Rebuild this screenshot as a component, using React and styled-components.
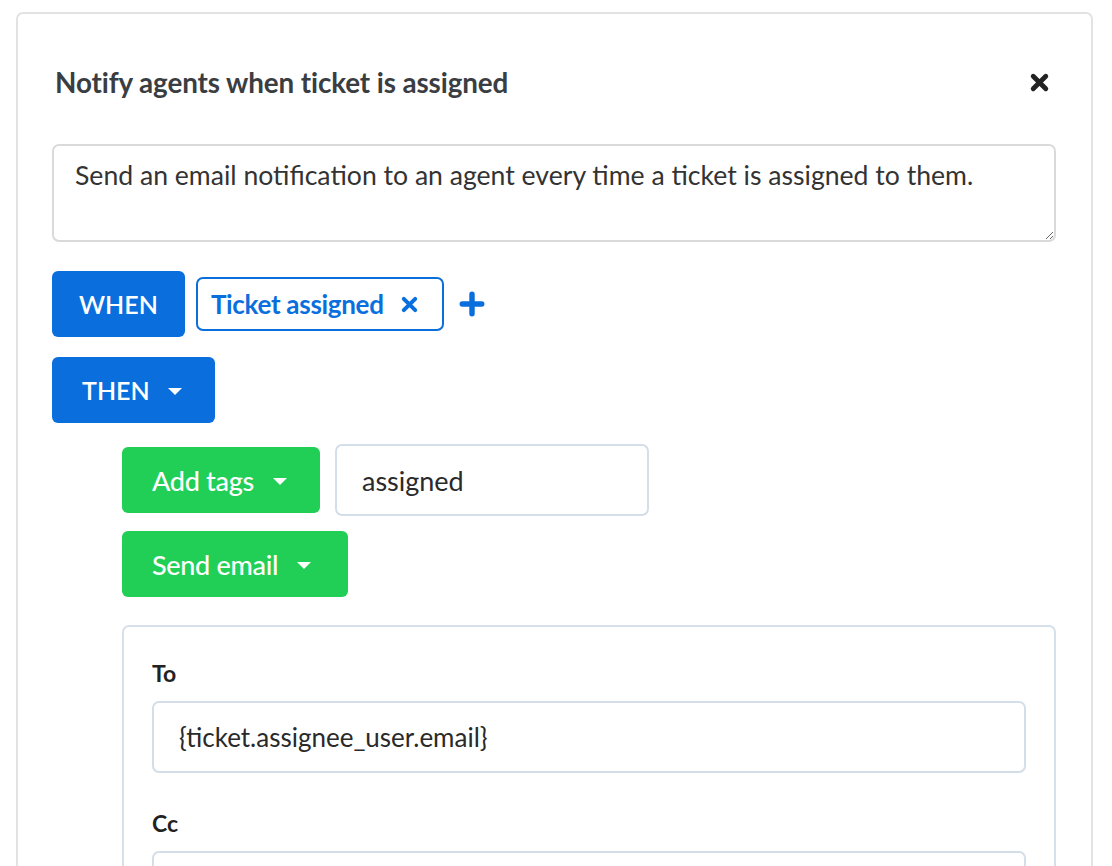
import React from "react";
import styled, { createGlobalStyle } from "styled-components";

const Global = createGlobalStyle`
  html, body { margin: 0; padding: 0; background: #ffffff; }
  body { font-family: Lato, "Open Sans", sans-serif; color: #333; }
  * { box-sizing: border-box; }
`;

const BLUE = "#0a6fdd";
const GREEN = "#21cf57";

const Page = styled.div`
  padding: 12px 19px 0 16px;
  height: 866px;
  overflow: hidden;
`;

const Card = styled.div`
  border: 2px solid #e2e2e2;
  border-radius: 7px;
  padding: 46px 35px 40px 34px;
  min-height: 900px;
`;

const Header = styled.div`
  display: flex;
  align-items: center;
  justify-content: space-between;
  height: 44px;
  margin-bottom: 40px;
`;

const Title = styled.h2`
  margin: 0 0 0 3px;
  font-size: 27.8px;
  font-weight: 700;
  color: #3a3d41;
  letter-spacing: -0.1px;
`;

const CloseBtn = styled.button`
  border: 0;
  background: none;
  padding: 0;
  margin-right: 6px;
  width: 22px;
  height: 22px;
  display: flex;
  align-items: center;
  justify-content: center;
  cursor: pointer;
`;

const Description = styled.textarea`
  display: block;
  width: 100%;
  height: 98px;
  border: 2px solid #dadada;
  border-radius: 7px;
  padding: 12px 21px;
  font-family: inherit;
  font-size: 26.6px;
  line-height: 34px;
  color: #333;
  resize: vertical;
  outline: none;
`;

const Row = styled.div`
  display: flex;
  align-items: center;
  margin-top: ${(p) => p.$mt || 0}px;
  margin-left: ${(p) => p.$indent || 0}px;
`;

const Pill = styled.button`
  display: inline-flex;
  align-items: center;
  gap: ${(p) => (p.$tone === "green" ? 19 : 18)}px;
  height: 66px;
  padding: 0 ${(p) => p.$pr ?? 30}px 0 ${(p) => p.$pl ?? 30}px;
  border: 0;
  border-radius: 6px;
  background: ${(p) => (p.$tone === "green" ? GREEN : BLUE)};
  color: #fff;
  font-family: inherit;
  font-size: ${(p) => (p.$tone === "green" ? 27 : 25)}px;
  font-weight: ${(p) => (p.$tone === "green" ? 500 : 600)};
  text-transform: ${(p) => (p.$tone === "green" ? "none" : "uppercase")};
  letter-spacing: ${(p) => (p.$tone === "green" ? "-0.3px" : "0px")};
  cursor: pointer;
`;

const Caret = styled.span`
  width: 0;
  height: 0;
  border-left: 7px solid transparent;
  border-right: 7px solid transparent;
  border-top: 7px solid #fff;
  margin-top: 3px;
`;

const Chip = styled.span`
  display: inline-flex;
  align-items: center;
  gap: 16px;
  height: 54px;
  margin-left: 11px;
  padding: 0 23px 0 13px;
  border: 2px solid ${BLUE};
  border-radius: 7px;
  color: ${BLUE};
  font-size: 26px;
  font-weight: 700;
  letter-spacing: -0.3px;
`;

const IconBtn = styled.span`
  display: inline-flex;
  align-items: center;
  justify-content: center;
  margin-left: ${(p) => p.$ml || 0}px;
`;

const TextInput = styled.input`
  height: 72px;
  width: ${(p) => (p.$w ? `${p.$w}px` : "100%")};
  margin-left: ${(p) => p.$ml || 0}px;
  border: 2px solid #d3dee9;
  border-radius: 7px;
  padding: 0 25px;
  font-family: inherit;
  font-size: ${(p) => p.$fs || 26}px;
  color: #2a2a2a;
  outline: none;
`;

const EmailBox = styled.div`
  margin: 28px 0 0 70px;
  border: 2px solid #d5e0ea;
  border-radius: 7px;
  padding: 24px 28px 40px 28px;
`;

const Field = styled.div`
  display: flex;
  flex-direction: column;
  & + & { margin-top: 28px; }
`;

const Label = styled.label`
  font-size: 23px;
  font-weight: 700;
  color: #222;
  line-height: 28px;
  margin: 8px 0 14px 0;
`;

const Times = ({ size = 20, color = "#222", w = 5 }) => (
  <svg width={size} height={size} viewBox="0 0 20 20" aria-hidden="true">
    <path d="M4 4 L16 16 M16 4 L4 16" stroke={color} strokeWidth={w} strokeLinecap="round" />
  </svg>
);

const Plus = ({ size = 24, color = BLUE }) => (
  <svg width={size} height={size} viewBox="0 0 24 24" aria-hidden="true">
    <path d="M12 3 V21 M3 12 H21" stroke={color} strokeWidth="5" strokeLinecap="round" />
  </svg>
);

export default function App() {
  return (
    <>
      <Global />
      <Page>
        <Card>
          <Header>
            <Title>Notify agents when ticket is assigned</Title>
            <CloseBtn aria-label="Close">
              <Times size={21} color="#222" w={4.6} />
            </CloseBtn>
          </Header>
          <Description defaultValue="Send an email notification to an agent every time a ticket is assigned to them." />

          <Row $mt={29}>
            <Pill $pl={27} $pr={27}>When</Pill>
            <Chip>
              Ticket assigned
              <Times size={19} color={BLUE} w={4.2} />
            </Chip>
            <IconBtn $ml={15}>
              <Plus size={26} />
            </IconBtn>
          </Row>

          <Row $mt={20}>
            <Pill $pr={33}>
              Then <Caret />
            </Pill>
          </Row>

          <Row $mt={21} $indent={70}>
            <Pill $tone="green" $pr={33}>
              Add tags <Caret />
            </Pill>
            <TextInput $w={314} $ml={15} $fs={27} defaultValue="assigned" />
          </Row>

          <Row $mt={15} $indent={70}>
            <Pill $tone="green" $pr={37}>
              Send email <Caret />
            </Pill>
          </Row>

          <EmailBox>
            <Field>
              <Label>To</Label>
              <TextInput defaultValue="{ticket.assignee_user.email}" />
            </Field>
            <Field>
              <Label>Cc</Label>
              <TextInput defaultValue="" />
            </Field>
          </EmailBox>
        </Card>
      </Page>
    </>
  );
}
